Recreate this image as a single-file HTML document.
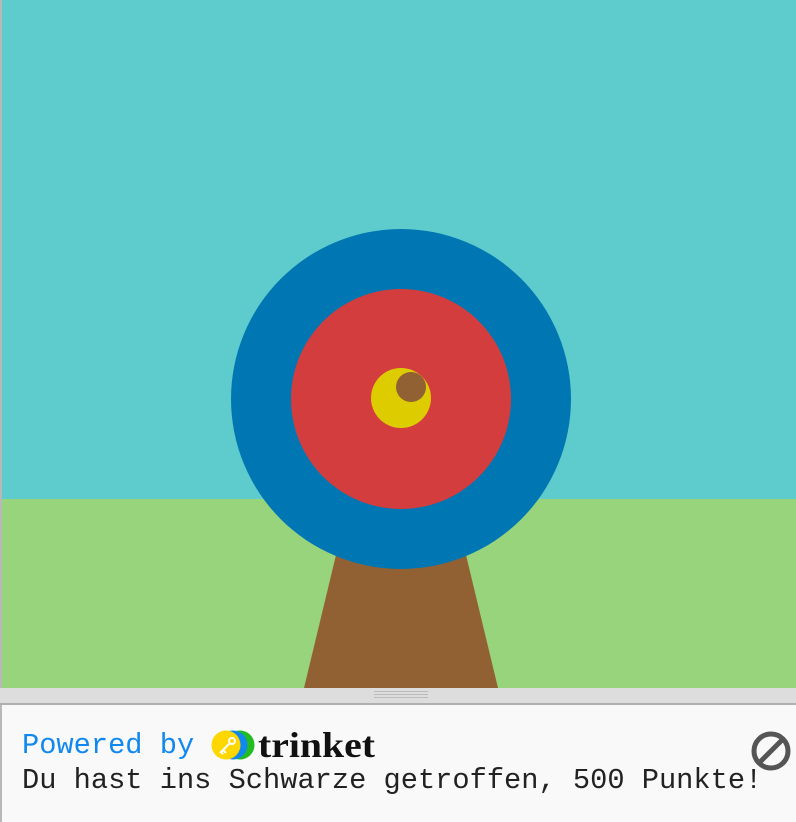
<!DOCTYPE html>
<html><head><style>
body{margin:0;width:796px;height:822px;overflow:hidden;background:#f9f9f9;position:relative;font-family:"Liberation Mono",monospace}
</style></head><body>
<svg width="796" height="822" style="position:absolute;left:0;top:0">
<rect x="0" y="0" width="796" height="822" fill="#f9f9f9"/>
<rect x="0" y="0" width="796" height="499" fill="#5ecccc"/>
<rect x="0" y="499" width="796" height="189" fill="#98d47c"/>
<polygon points="336,555 466,555 498,688 304,688" fill="#916133"/>
<circle cx="401" cy="399" r="170" fill="#0077b3"/>
<circle cx="401" cy="399" r="110" fill="#d43d3d"/>
<circle cx="401" cy="398" r="30" fill="#ddcc00"/>
<circle cx="411" cy="387" r="15" fill="#916133"/>
<rect x="0" y="0" width="2" height="822" fill="#b8b8b8"/>
<rect x="0" y="688" width="796" height="15" fill="#dddddd"/>
<rect x="0" y="703" width="796" height="2" fill="#b0b0b0"/>
<rect x="374" y="691" width="54" height="1" fill="#bbb"/>
<rect x="374" y="694" width="54" height="1" fill="#bbb"/>
<rect x="374" y="697" width="54" height="1" fill="#bbb"/>
<circle cx="240" cy="745" r="14.5" fill="#22bb22"/>
<circle cx="233" cy="745" r="14.5" fill="#1188ee"/>
<circle cx="226" cy="745" r="14.5" fill="#ffd700"/>
<circle cx="232" cy="741" r="3" fill="none" stroke="#fff" stroke-width="2"/>
<path d="M230 743 L220 753 M223 750 L226 753 M221 752 L223 754" stroke="#fff" stroke-width="2" fill="none"/>
<circle cx="771" cy="751" r="17" fill="none" stroke="#555" stroke-width="5"/>
<path d="M760 762 L782 740" stroke="#555" stroke-width="5"/>
<text x="22" y="753" font-family="Liberation Mono, monospace" font-size="28.7" fill="#1188ee">Powered by</text>
<text x="258" y="757" font-family="Liberation Serif, serif" font-weight="bold" font-size="36" textLength="117" lengthAdjust="spacingAndGlyphs" fill="#111">trinket</text>
<text x="22" y="788" font-family="Liberation Mono, monospace" font-size="28.7" fill="#222">Du hast ins Schwarze getroffen, 500 Punkte!</text>
</svg>
</body></html>
